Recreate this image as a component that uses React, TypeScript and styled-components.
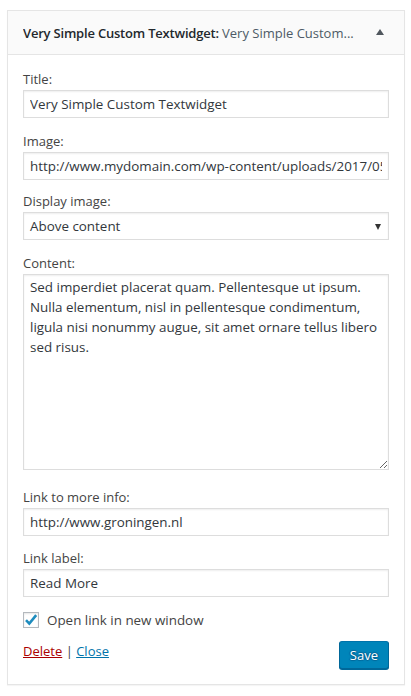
import React from 'react';
import styled, { createGlobalStyle } from 'styled-components';

const GlobalStyle = createGlobalStyle`
    body {
        margin: 0;
        background: #ffffff;
        font-family: "Open Sans", "Noto Sans", sans-serif;
        color: #444;
    }
`;

const Page = styled.div`
    padding: 10px 6px 9px 7px;
`;

const WidgetCard = styled.div`
    border: 1px solid #e5e5e5;
    background: #fff;
    box-shadow: 0 1px 1px rgba(0, 0, 0, 0.04);
`;

const WidgetHeader = styled.div`
    display: flex;
    align-items: center;
    justify-content: space-between;
    height: 43px;
    padding: 0 20px 0 15px;
    background: #fafafa;
    border-bottom: 1px solid #e5e5e5;
`;

const HeaderTitle = styled.h3`
    margin: 0;
    font-size: 13px;
    letter-spacing: -0.2px;
    font-weight: 600;
    color: #23282d;
    white-space: nowrap;
    overflow: hidden;
`;

const HeaderSub = styled.span`
    font-weight: 400;
    letter-spacing: 0;
    color: #4d5a66;
`;

const ToggleArrow = styled.span`
    width: 0;
    height: 0;
    border-left: 4.5px solid transparent;
    border-right: 4.5px solid transparent;
    border-bottom: 6px solid #50575e;
    margin-bottom: 2px;
`;

const WidgetBody = styled.div`
    padding: 14px 15px 15px 15px;
`;

interface FieldI {
    bottom?: number;
}

const Field = styled.div<FieldI>`
    margin-bottom: ${(p: FieldI) => (p.bottom ?? 13)}px;
`;

const Label = styled.label`
    display: block;
    font-size: 13px;
    line-height: 21px;
    color: #444;
`;

const TextInput = styled.input`
    display: block;
    box-sizing: border-box;
    width: 100%;
    height: 28px;
    margin: 0;
    padding: 3px 6px;
    border: 1px solid #ddd;
    box-shadow: inset 0 1px 2px rgba(0, 0, 0, 0.07);
    background: #fff;
    color: #32373c;
    font-family: "Open Sans", "Noto Sans", sans-serif;
    font-size: 13.4px;
    outline: none;
`;

const SelectBox = styled.div`
    position: relative;
    display: flex;
    align-items: center;
    box-sizing: border-box;
    height: 28px;
    padding: 0 6px;
    border: 1px solid #ddd;
    box-shadow: inset 0 1px 2px rgba(0, 0, 0, 0.07);
    font-size: 13.4px;
    color: #32373c;
`;

const SelectArrow = styled.span`
    position: absolute;
    right: 7px;
    top: 11px;
    width: 0;
    height: 0;
    border-left: 3.5px solid transparent;
    border-right: 3.5px solid transparent;
    border-top: 6px solid #333;
`;

const TextArea = styled.textarea`
    display: block;
    box-sizing: border-box;
    width: 100%;
    height: 196px;
    margin: 0;
    padding: 2px 6px;
    border: 1px solid #ddd;
    box-shadow: inset 0 1px 2px rgba(0, 0, 0, 0.07);
    color: #32373c;
    font-family: "Open Sans", "Noto Sans", sans-serif;
    font-size: 13.4px;
    line-height: 20px;
    resize: vertical;
    outline: none;
`;

const CheckRow = styled.div`
    display: flex;
    align-items: center;
    gap: 8px;
    margin-top: 14px;
    font-size: 13.4px;
    color: #444;
`;

const CheckBox = styled.span`
    display: flex;
    align-items: center;
    justify-content: center;
    box-sizing: border-box;
    width: 16px;
    height: 16px;
    border: 1px solid #b4b9be;
    box-shadow: inset 0 1px 2px rgba(0, 0, 0, 0.1);
    background: #fff;
`;

const Actions = styled.div`
    display: flex;
    justify-content: space-between;
    align-items: flex-start;
    margin-top: 12px;
`;

const LinkGroup = styled.div`
    font-size: 13px;
    color: #444;
    line-height: 20px;
    padding-top: 0;
`;

interface ActionLinkI {
    danger?: boolean;
}

const ActionLink = styled.a<ActionLinkI>`
    color: ${(p: ActionLinkI) => (p.danger ? '#a00' : '#0073aa')};
    text-decoration: underline;
    cursor: pointer;
`;

const SaveButton = styled.button`
    height: 28px;
    padding: 0 10px 1px;
    margin-top: 0;
    border: 1px solid #0073aa;
    border-color: #0073aa #006799 #006799;
    border-radius: 3px;
    background: #0085ba;
    box-shadow: 0 1px 0 #006799;
    color: #fff;
    font-family: "Open Sans", "Noto Sans", sans-serif;
    font-size: 13px;
    text-shadow: 0 -1px 1px #006799, 1px 0 1px #006799, 0 1px 1px #006799, -1px 0 1px #006799;
    cursor: pointer;
`;

const CONTENT =
    'Sed imperdiet placerat quam. Pellentesque ut ipsum. Nulla elementum, nisl in pellentesque condimentum, ligula nisi nonummy augue, sit amet ornare tellus libero sed risus.';

export default function App() {
    return (
        <Page>
            <GlobalStyle />
            <WidgetCard>
                <WidgetHeader>
                    <HeaderTitle>
                        Very Simple Custom Textwidget: <HeaderSub>Very Simple Custom...</HeaderSub>
                    </HeaderTitle>
                    <ToggleArrow />
                </WidgetHeader>
                <WidgetBody>
                    <Field>
                        <Label>Title:</Label>
                        <TextInput defaultValue="Very Simple Custom Textwidget" />
                    </Field>
                    <Field bottom={11}>
                        <Label>Image:</Label>
                        <TextInput defaultValue="http://www.mydomain.com/wp-content/uploads/2017/05/image.jpg" />
                    </Field>
                    <Field>
                        <Label>Display image:</Label>
                        <SelectBox>
                            Above content
                            <SelectArrow />
                        </SelectBox>
                    </Field>
                    <Field bottom={17}>
                        <Label>Content:</Label>
                        <TextArea defaultValue={CONTENT} />
                    </Field>
                    <Field bottom={12}>
                        <Label>Link to more info:</Label>
                        <TextInput defaultValue="http://www.groningen.nl" />
                    </Field>
                    <Field bottom={0}>
                        <Label>Link label:</Label>
                        <TextInput defaultValue="Read More" />
                    </Field>
                    <CheckRow>
                        <CheckBox>
                            <svg width="14" height="14" viewBox="0 0 14 14">
                                <path d="M2 7.2 L5.3 10.6 L12.2 2.2" fill="none" stroke="#1e8cbe" strokeWidth="2.6" strokeLinejoin="miter" />
                            </svg>
                        </CheckBox>
                        Open link in new window
                    </CheckRow>
                    <Actions>
                        <LinkGroup>
                            <ActionLink danger>Delete</ActionLink> | <ActionLink>Close</ActionLink>
                        </LinkGroup>
                        <SaveButton>Save</SaveButton>
                    </Actions>
                </WidgetBody>
            </WidgetCard>
        </Page>
    );
}
